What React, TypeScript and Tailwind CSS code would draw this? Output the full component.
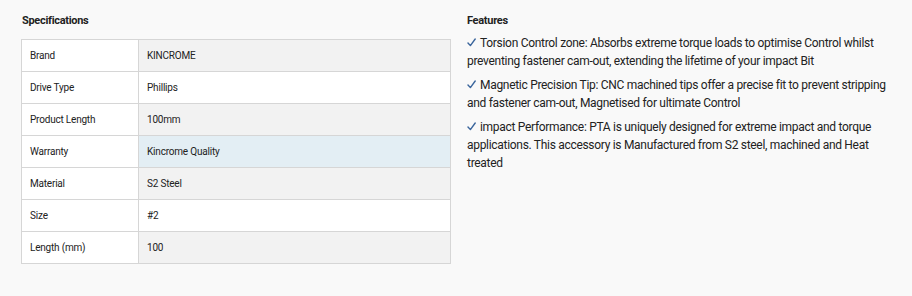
import React from 'react'

const specs = [
  { label: 'Brand', value: 'KINCROME' },
  { label: 'Drive Type', value: 'Phillips' },
  { label: 'Product Length', value: '100mm' },
  { label: 'Warranty', value: 'Kincrome Quality' },
  { label: 'Material', value: 'S2 Steel' },
  { label: 'Size', value: '#2' },
  { label: 'Length (mm)', value: '100' },
]

const features = [
  'Torsion Control zone: Absorbs extreme torque loads to optimise Control whilst preventing fastener cam-out, extending the lifetime of your impact Bit',
  'Magnetic Precision Tip: CNC machined tips offer a precise fit to prevent stripping and fastener cam-out, Magnetised for ultimate Control',
  'impact Performance: PTA is uniquely designed for extreme impact and torque applications. This accessory is Manufactured from S2 steel, machined and Heat treated',
]

function Check() {
  return (
    <svg width="9" height="9" viewBox="0 0 9 9" className="mr-[4px] inline-block align-[-0px]" fill="none">
      <path d="M1 5 L3.4 7.6 L8.2 1" stroke="#3a659c" strokeWidth="1.4" strokeLinecap="round" strokeLinejoin="round" />
    </svg>
  )
}

export default function App() {
  return (
    <div className="min-h-[296px] w-[912px] bg-[#f9f9f9] text-[#222] font-['Roboto',sans-serif]">
      <div className="flex gap-4 pl-[21px] pt-[14px]">
        {/* Specifications */}
        <div className="w-[430px] shrink-0">
          <h3 className="mb-[11px] pl-px text-[11px] font-bold leading-[14px] tracking-[-0.3px]">Specifications</h3>
          <table className="w-full border-collapse text-[10px] tracking-[-0.2px]">
            <tbody>
              {specs.map((row, i) => {
                let valueBg = i % 2 === 0 ? 'bg-[#f2f2f2]' : 'bg-white'
                if (row.label === 'Warranty') valueBg = 'bg-[#e3eef4]'
                return (
                  <tr key={row.label} className="h-[32px]">
                    <td className="w-[117px] border border-[#d6d6d6] bg-white px-2">{row.label}</td>
                    <td className={`border border-[#d6d6d6] px-2 ${valueBg}`}>{row.value}</td>
                  </tr>
                )
              })}
            </tbody>
          </table>
        </div>

        {/* Features */}
        <div className="w-[430px]">
          <h3 className="mb-[6px] text-[11px] font-bold leading-[14px] tracking-[-0.3px]">Features</h3>
          <div className="flex flex-col gap-[6px] text-[12px] leading-[18px] tracking-[-0.3px]">
            {features.map((f) => (
              <p key={f}>
                <Check />
                {f}
              </p>
            ))}
          </div>
        </div>
      </div>
    </div>
  )
}
